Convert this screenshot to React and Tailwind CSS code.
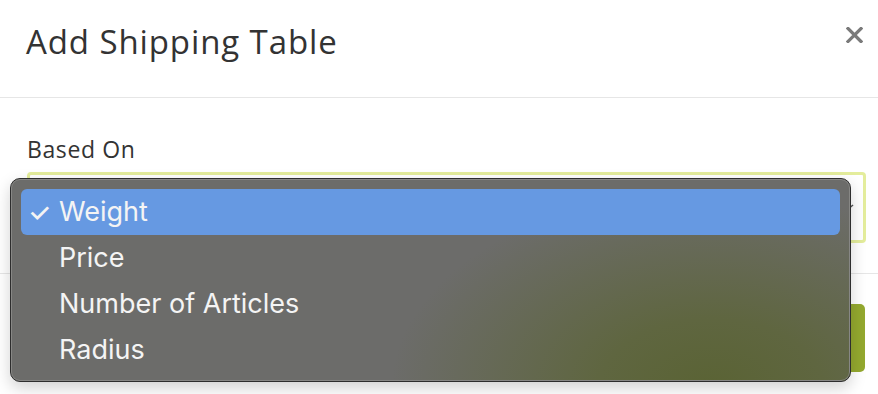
// Add Shipping Table modal with the native "Based On" select open.

const OPTIONS = ["Weight", "Price", "Number of Articles", "Radius"]

function CloseIcon() {
  return (
    <svg width="17" height="16" viewBox="0 0 17 16" className="block">
      <path d="M2 1.5 L15 14.5 M15 1.5 L2 14.5" stroke="#7a7a7a" strokeWidth="3.2" strokeLinecap="square" />
    </svg>
  )
}

function SelectMenu() {
  return (
    <div
      className="absolute left-[10px] top-[178px] w-[841px] h-[204px] rounded-[10px] border border-[#2e2e2e] shadow-[0_6px_16px_rgba(0,0,0,0.18)] overflow-hidden"
      style={{
        background:
          "radial-gradient(ellipse 320px 200px at 700px 210px, #5a6334 0%, #5f6640 35%, rgba(108,108,106,0) 100%), #6c6c6a",
      }}
    >
      <div className="h-full rounded-[9px] border border-[#878785] px-[9px] py-[9px] font-['Inter',sans-serif]">
        {OPTIONS.map((o, i) => (
          <div
            key={o}
            className={
              "h-[46px] flex items-center rounded-[6px] text-[27px] text-[#f4f4f4] " +
              (i === 0 ? "bg-[#6699e2]" : "")
            }
          >
            <span className="w-[38px] pl-[7px] text-[26px] font-medium">{i === 0 ? "✓" : ""}</span>
            <span>{o}</span>
          </div>
        ))}
      </div>
    </div>
  )
}

export default function App() {
  return (
    <div className="relative w-[878px] h-[394px] overflow-hidden bg-white font-['Open_Sans',sans-serif] text-[#333]">
      <div className="h-[98px] border-b border-[#e6e6e6] pl-[26px] pr-[15px] flex items-start justify-between">
        <h1 className="mt-[21px] text-[33px] leading-[42px] tracking-[0.9px]">Add Shipping Table</h1>
        <button className="mt-[27px]">
          <CloseIcon />
        </button>
      </div>

      <div className="h-[176px] border-b border-[#e6e6e6] pl-[27px] pr-[12px] pt-[37px]">
        <label className="block text-[23px] leading-[29px] tracking-[0.6px]">Based On</label>
        <div className="mt-[8px] h-[71px] rounded-[4px] border-[3px] border-[#e4ed9c] bg-white flex items-center justify-end pr-[8px]">
          <svg width="10" height="10" viewBox="0 0 10 10">
            <path d="M2 7 L8 2" stroke="#555" strokeWidth="1.5" />
          </svg>
        </div>
      </div>

      <div className="flex justify-end pr-[13px] pt-[30px]">
        <button className="w-[120px] h-[68px] rounded-[5px] bg-[#94a92f]" />
      </div>

      <SelectMenu />
    </div>
  )
}
